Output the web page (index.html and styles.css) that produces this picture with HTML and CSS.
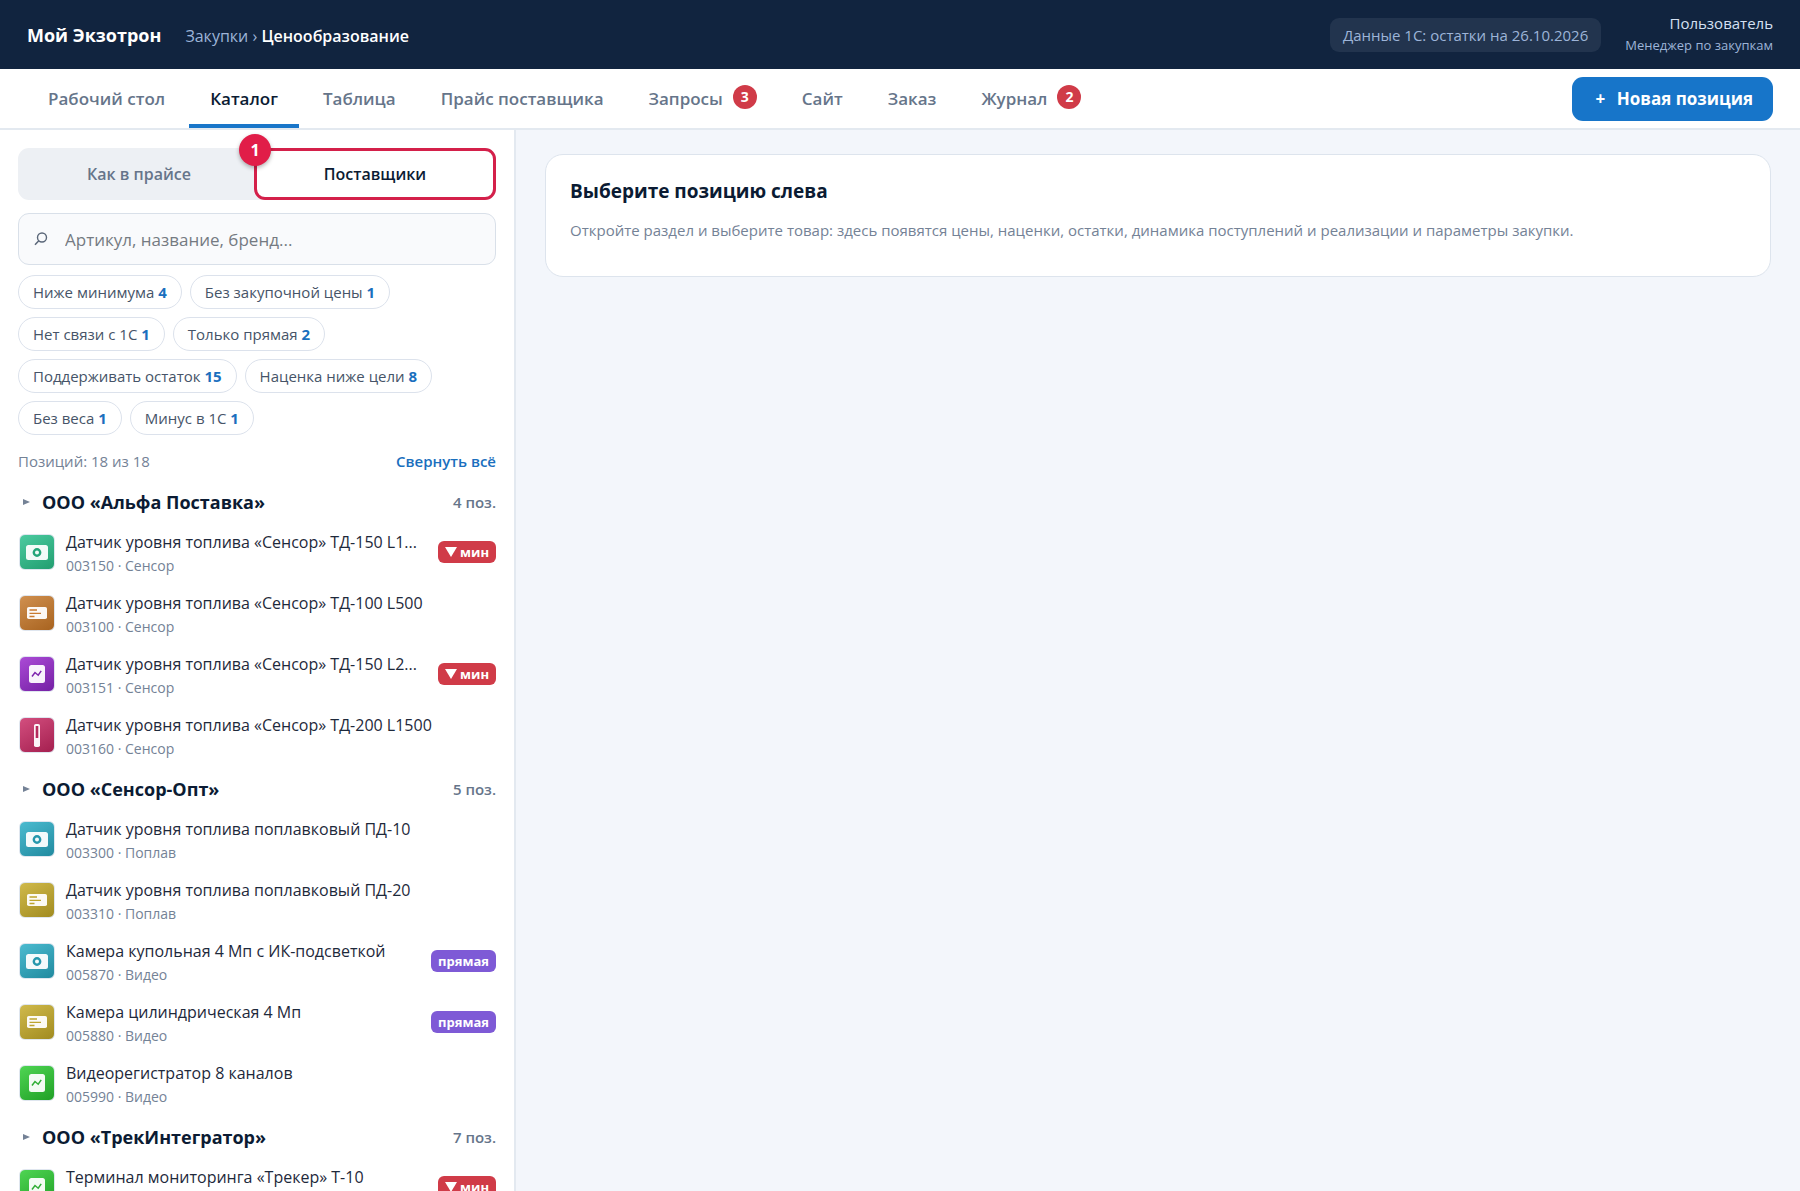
FILE: index.html
```
<!DOCTYPE html>
<html lang="ru">
<head>
    <meta charset="UTF-8">
    <meta name="viewport" content="width=device-width, initial-scale=1.0">
    <title>Мой Экзотрон — Ценообразование</title>
    <link rel="stylesheet" href="styles.css">
</head>
<body>
    <svg class="sprite" aria-hidden="true">
        <symbol id="ico-camera" viewBox="0 0 34 34">
            <rect x="6" y="10" width="22" height="15" rx="2.5" fill="#fff" fill-opacity=".94"/>
            <circle cx="17" cy="17.500" r="3.200" fill="none" stroke="currentColor" stroke-width="2.400"/>
        </symbol>
        <symbol id="ico-card" viewBox="0 0 34 34">
            <rect x="7" y="11" width="20" height="12" rx="1.800" fill="#fff" fill-opacity=".95"/>
            <path d="M9.500 14h7.500M9.500 17.300h11.500M9.500 20.500h5" stroke="currentColor" stroke-width="1.300"/>
        </symbol>
        <symbol id="ico-chart" viewBox="0 0 34 34">
            <rect x="9" y="8" width="16" height="18" rx="2.500" fill="#fff" fill-opacity=".94"/>
            <path d="M12 19.500l3-4 3.200 2.700 3-4.400" fill="none" stroke="currentColor" stroke-width="1.500"/>
        </symbol>
        <symbol id="ico-probe" viewBox="0 0 34 34">
            <rect x="14" y="6" width="6" height="23" rx="1.800" fill="#fff" fill-opacity=".95"/>
            <rect x="15.700" y="8" width="2.600" height="12" fill="currentColor"/>
        </symbol>
    </svg>

    <header class="topbar">
        <a class="brand" href="#">Мой Экзотрон</a>
        <div class="crumbs"><a href="#">Закупки</a> › <b>Ценообразование</b></div>
        <div class="sync">Данные 1С: остатки на 26.10.2026</div>
        <div class="user">
            <div class="user-name">Пользователь</div>
            <div class="user-role">Менеджер по закупкам</div>
        </div>
    </header>

    <nav class="tabs">
        <a class="tab" href="#">Рабочий стол</a>
        <a class="tab active" href="#">Каталог</a>
        <a class="tab" href="#">Таблица</a>
        <a class="tab" href="#">Прайс поставщика</a>
        <a class="tab" href="#">Запросы <span class="count">3</span></a>
        <a class="tab" href="#">Сайт</a>
        <a class="tab" href="#">Заказ</a>
        <a class="tab" href="#">Журнал <span class="count">2</span></a>
        <button class="btn-new" type="button"><span>+</span> Новая позиция</button>
    </nav>

    <div class="layout">
        <aside class="sidebar">
            <div class="segment">
                <button type="button">Как в прайсе</button>
                <button type="button" class="on">Поставщики<span class="step">1</span></button>
            </div>

            <div class="search">
                <svg width="14" height="14" viewBox="0 0 14 14" aria-hidden="true">
                    <circle cx="8" cy="5.500" r="4.500" fill="none" stroke="#5b6779" stroke-width="1.400"/>
                    <path d="M4.800 8.700L1 12.800" stroke="#5b6779" stroke-width="1.500"/>
                </svg>
                <input type="text" aria-label="Поиск" placeholder="Артикул, название, бренд...">
            </div>

            <div class="chips">
                <button type="button">Ниже минимума <b>4</b></button>
                <button type="button">Без закупочной цены <b>1</b></button>
                <button type="button">Нет связи с 1С <b>1</b></button>
                <button type="button">Только прямая <b>2</b></button>
                <button type="button">Поддерживать остаток <b>15</b></button>
                <button type="button">Наценка ниже цели <b>8</b></button>
                <button type="button">Без веса <b>1</b></button>
                <button type="button">Минус в 1С <b>1</b></button>
            </div>

            <div class="summary">
                <span>Позиций: 18 из 18</span>
                <button type="button">Свернуть всё</button>
            </div>

            <section>
                <h2 class="group"><i class="arrow"></i>ООО «Альфа Поставка»<span>4 поз.</span></h2>
                <a class="item" href="#">
                    <svg class="thumb green"><use href="#ico-camera"/></svg>
                    <div class="info">
                        <div class="name">Датчик уровня топлива «Сенсор» ТД-150 L1...</div>
                        <div class="meta">003150 · Сенсор</div>
                    </div>
                    <span class="tag low"><i></i>мин</span>
                </a>
                <a class="item" href="#">
                    <svg class="thumb orange"><use href="#ico-card"/></svg>
                    <div class="info">
                        <div class="name">Датчик уровня топлива «Сенсор» ТД-100 L500</div>
                        <div class="meta">003100 · Сенсор</div>
                    </div>
                </a>
                <a class="item" href="#">
                    <svg class="thumb purple"><use href="#ico-chart"/></svg>
                    <div class="info">
                        <div class="name">Датчик уровня топлива «Сенсор» ТД-150 L2...</div>
                        <div class="meta">003151 · Сенсор</div>
                    </div>
                    <span class="tag low"><i></i>мин</span>
                </a>
                <a class="item" href="#">
                    <svg class="thumb crimson"><use href="#ico-probe"/></svg>
                    <div class="info">
                        <div class="name">Датчик уровня топлива «Сенсор» ТД-200 L1500</div>
                        <div class="meta">003160 · Сенсор</div>
                    </div>
                </a>
            </section>

            <section>
                <h2 class="group"><i class="arrow"></i>ООО «Сенсор-Опт»<span>5 поз.</span></h2>
                <a class="item" href="#">
                    <svg class="thumb teal"><use href="#ico-camera"/></svg>
                    <div class="info">
                        <div class="name">Датчик уровня топлива поплавковый ПД-10</div>
                        <div class="meta">003300 · Поплав</div>
                    </div>
                </a>
                <a class="item" href="#">
                    <svg class="thumb gold"><use href="#ico-card"/></svg>
                    <div class="info">
                        <div class="name">Датчик уровня топлива поплавковый ПД-20</div>
                        <div class="meta">003310 · Поплав</div>
                    </div>
                </a>
                <a class="item" href="#">
                    <svg class="thumb teal"><use href="#ico-camera"/></svg>
                    <div class="info">
                        <div class="name">Камера купольная 4 Мп с ИК-подсветкой</div>
                        <div class="meta">005870 · Видео</div>
                    </div>
                    <span class="tag direct">прямая</span>
                </a>
                <a class="item" href="#">
                    <svg class="thumb gold"><use href="#ico-card"/></svg>
                    <div class="info">
                        <div class="name">Камера цилиндрическая 4 Мп</div>
                        <div class="meta">005880 · Видео</div>
                    </div>
                    <span class="tag direct">прямая</span>
                </a>
                <a class="item" href="#">
                    <svg class="thumb lime"><use href="#ico-chart"/></svg>
                    <div class="info">
                        <div class="name">Видеорегистратор 8 каналов</div>
                        <div class="meta">005990 · Видео</div>
                    </div>
                </a>
            </section>

            <section>
                <h2 class="group"><i class="arrow"></i>ООО «ТрекИнтегратор»<span>7 поз.</span></h2>
                <a class="item" href="#">
                    <svg class="thumb lime"><use href="#ico-chart"/></svg>
                    <div class="info">
                        <div class="name">Терминал мониторинга «Трекер» Т-10</div>
                        <div class="meta"></div>
                    </div>
                    <span class="tag low"><i></i>мин</span>
                </a>
            </section>
        </aside>

        <main class="content">
            <div class="card">
                <h1>Выберите позицию слева</h1>
                <p>Откройте раздел и выберите товар: здесь появятся цены, наценки, остатки, динамика поступлений и реализации и параметры закупки.</p>
            </div>
        </main>
    </div>
</body>
</html>
```
FILE: styles.css
```
* {
    box-sizing: border-box;
}
body {
    font-family: "Open Sans", "Noto Sans", sans-serif;
    font-size: 15px;
    margin: 0;
    height: 100vh;
    display: flex;
    flex-direction: column;
    overflow: hidden;
    color: #1e293b;
    background-color: #f3f6fb;
}
a {
    color: inherit;
    text-decoration: none;
}
button, input {
    font: inherit;
    color: inherit;
}
button {
    cursor: pointer;
}
.sprite {
    display: none;
}

/* top bar */
.topbar {
    flex: none;
    display: flex;
    align-items: center;
    height: 69px;
    padding: 0 27px;
    background-color: #11243f;
    color: #9db4d8;
}
.brand {
    font-size: 18px;
    font-weight: 700;
    color: #fff;
    margin-right: 24px;
}
.crumbs {
    font-size: 16px;
    padding-top: 2px;
}
.crumbs b {
    font-weight: 600;
    color: #fff;
}
.sync {
    margin-left: auto;
    padding: 0 13px;
    line-height: 34px;
    border-radius: 9px;
    background-color: #22344e;
}
.user {
    margin-left: 24px;
    padding-bottom: 2px;
    text-align: right;
}
.user-name {
    line-height: 23px;
    color: #d5e0f2;
}
.user-role {
    font-size: 13px;
    line-height: 21px;
}

/* tabs */
.tabs {
    flex: none;
    display: flex;
    gap: 3px;
    height: 61px;
    padding: 0 27px;
    background-color: #fff;
    border-bottom: 2px solid #e3e9f0;
}
.tab {
    display: flex;
    align-items: center;
    padding: 3px 21px 0;
    font-size: 17px;
    font-weight: 600;
    color: #66758a;
    border-bottom: 4px solid transparent;
}
.tab.active {
    color: #0b1b33;
    border-bottom-color: #1976c9;
}
.count {
    width: 24px;
    height: 24px;
    margin: -3px 0 0 10px;
    border-radius: 12px;
    background-color: #d03b48;
    color: #fff;
    font-size: 14px;
    font-weight: 700;
    line-height: 24px;
    text-align: center;
}
.btn-new {
    align-self: center;
    margin-left: auto;
    height: 44px;
    padding: 0 20px 0 24px;
    border: 0;
    border-radius: 11px;
    background-color: #1775c9;
    color: #fff;
    font-size: 17px;
    font-weight: 700;
}
.btn-new span {
    margin-right: 7px;
}

.layout {
    flex: 1;
    display: flex;
    min-height: 0;
}

/* sidebar */
.sidebar {
    flex: 0 0 516px;
    padding: 18px;
    overflow: auto;
    scrollbar-width: none;
    background-color: #fff;
    border-right: 2px solid #e3e9f0;
}
.segment {
    display: flex;
    height: 52px;
    padding: 3px;
    border-radius: 11px;
    background-color: #edf0f4;
}
.segment button {
    flex: 1;
    border: 0;
    border-radius: 8px;
    background: none;
    font-size: 16px;
    font-weight: 600;
    color: #66758a;
}
.segment .on {
    position: relative;
    outline: 3px solid #d4204a;
    background-color: #fff;
    color: #0b1b33;
}
.step {
    position: absolute;
    top: -17px;
    left: -18px;
    width: 32px;
    height: 32px;
    border-radius: 50%;
    background-color: #e11d48;
    box-shadow: 0 2px 4px rgba(0,0,0,0.3);
    color: #fff;
    font-weight: 700;
    line-height: 32px;
}
.search {
    display: flex;
    align-items: center;
    height: 52px;
    margin: 13px 0 10px;
    padding: 0 15px;
    border: 1px solid #d9e0e9;
    border-radius: 11px;
    background-color: #f9fafc;
}
.search input {
    flex: 1;
    margin-left: 17px;
    padding: 0;
    border: 0;
    outline: 0;
    background: none;
    font-size: 17px;
}
.search input::placeholder {
    color: #757a82;
}
.chips {
    display: flex;
    flex-wrap: wrap;
    gap: 8px;
}
.chips button {
    height: 34px;
    padding: 0 14px;
    border: 1px solid #dce2ec;
    border-radius: 17px;
    background-color: #fff;
    color: #465468;
}
.chips b {
    color: #1a6fbe;
}
.summary {
    display: flex;
    justify-content: space-between;
    align-items: center;
    height: 43px;
    padding-top: 9px;
    color: #748296;
}
.summary button {
    padding: 0;
    border: 0;
    background: none;
    color: #1a6fbe;
    font-weight: 600;
}
.group {
    display: flex;
    align-items: center;
    height: 43px;
    margin: 0;
    padding: 4px 0 0 5px;
    font-size: 18px;
    font-weight: 700;
    color: #0b1b33;
}
.group span {
    margin-left: auto;
    font-size: 15px;
    font-weight: 600;
    color: #66758a;
}
.arrow {
    margin-right: 12px;
    border-left: 7px solid #748296;
    border-top: 3px solid transparent;
    border-bottom: 3px solid transparent;
}
.item {
    display: flex;
    align-items: center;
    height: 61px;
}
.thumb {
    flex: none;
    width: 36px;
    height: 36px;
    margin: 0 11px 0 1px;
    border: 1px solid #dfe6ef;
    border-radius: 6px;
}
.green {
    color: #25a579;
    background: linear-gradient(150deg, #4bcba0, #229e70);
}
.orange {
    color: #c97a2f;
    background: linear-gradient(150deg, #d0904f, #a8631f);
}
.purple {
    color: #7d24ad;
    background: linear-gradient(150deg, #ab4bd6, #7420a4);
}
.crimson {
    color: #b52b5c;
    background: linear-gradient(150deg, #d34f7f, #a41f4f);
}
.teal {
    color: #2597ad;
    background: linear-gradient(150deg, #4bbbd0, #218a9f);
}
.gold {
    color: #bda52e;
    background: linear-gradient(150deg, #d0ba4b, #a18b20);
}
.lime {
    color: #2fae35;
    background: linear-gradient(150deg, #4fd553, #20a026);
}
.info {
    flex: 1;
    min-width: 0;
    padding-top: 5px;
}
.name {
    font-size: 16px;
    line-height: 23px;
    white-space: nowrap;
}
.meta {
    min-height: 23px;
    font-size: 14px;
    line-height: 23px;
    color: #748296;
}
.tag {
    display: flex;
    align-items: center;
    height: 22px;
    padding: 0 7px;
    border-radius: 6px;
    color: #fff;
    font-size: 13px;
    font-weight: 700;
}
.low {
    background-color: #d03b48;
}
.low i {
    margin-right: 3px;
    border-top: 10px solid #fff;
    border-left: 6px solid transparent;
    border-right: 6px solid transparent;
}
.direct {
    background-color: #7e5ad6;
}

/* right side */
.content {
    flex: 1;
    padding: 24px 29px;
}
.card {
    padding: 23px 24px 32px;
    border: 1px solid #dde4ed;
    border-radius: 18px;
    background-color: #fff;
}
.card h1 {
    margin: 0 0 12px;
    font-size: 19px;
    line-height: 26px;
    color: #0b1b33;
}
.card p {
    margin: 0;
    line-height: 28px;
    color: #748296;
}
```
